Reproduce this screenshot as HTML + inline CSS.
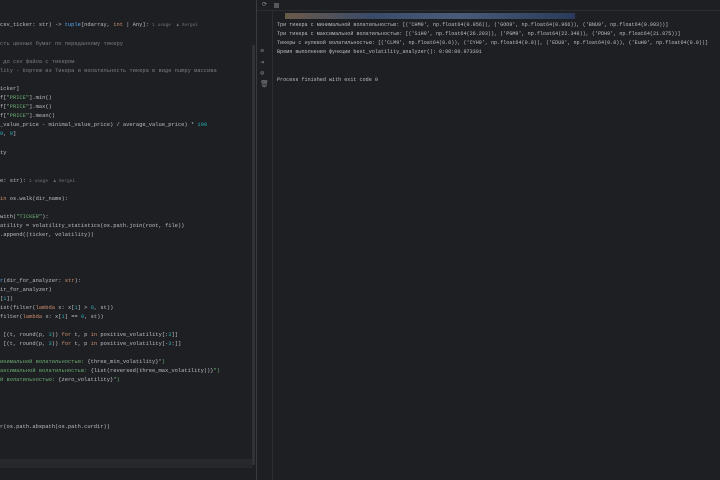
<!DOCTYPE html><html><head><meta charset="utf-8"><style>
body{margin:0;width:720px;height:480px;overflow:hidden;background:#1e1f22;font-family:"Liberation Mono","DejaVu Sans Mono",monospace;font-size:5.4px;color:#bcbec4}
.ed{position:absolute;left:0;top:0;width:256px;height:480px;background:#1e1f22;overflow:hidden}
.l{position:absolute;left:0;white-space:pre;line-height:8px}
.k{color:#cf8e6d}.s{color:#6aab73}.n{color:#2aacb8}.c{color:#7a7e85}.h{color:#6f737a;font-size:4.5px}.f{color:#56a8f5}
.div{position:absolute;left:256px;top:0;width:1px;height:480px;background:#393b40}
.con{position:absolute;left:257px;top:0;width:463px;height:480px;background:#1e1f22;overflow:hidden}
.tb{position:absolute;left:0;top:0;width:463px;height:10px;border-bottom:1px solid #2b2d30}
.side{position:absolute;left:0;top:11px;width:15px;height:469px;border-right:1px solid #2b2d30}
.o{position:absolute;left:20px;white-space:pre;line-height:8px;color:#bcbec4;font-size:5.1px}
</style></head><body>
<div class="ed">
<div class="l" style="top:21px">csv_ticker: str) -&gt; <span class="f">tuple</span>[ndarray, <span class="k">int</span> | Any]: <span class="h">1 usage  ♟ Sergei</span></div>
<div class="l c" style="top:40px">сть ценных бумаг по переданному тикеру</div>
<div class="l c" style="top:58px"> до csv файла с тикером</div>
<div class="l c" style="top:67px">lity - Кортеж из Тикера и волатильность тикера в виде numpy массива</div>
<div class="l" style="top:85px">icker]</div>
<div class="l" style="top:94px">f[<span class="s">"PRICE"</span>].min()</div>
<div class="l" style="top:103px">f[<span class="s">"PRICE"</span>].max()</div>
<div class="l" style="top:112px">f[<span class="s">"PRICE"</span>].mean()</div>
<div class="l" style="top:121px">_value_price - minimal_value_price) / average_value_price) * <span class="n">100</span></div>
<div class="l" style="top:130px"><span class="n">0</span>, <span class="n">0</span>]</div>
<div class="l" style="top:149px">ty</div>
<div class="l" style="top:177px">e: str): <span class="h">1 usage  ♟ Sergei</span></div>
<div class="l" style="top:195px"><span class="k">in</span> os.walk(dir_name):</div>
<div class="l" style="top:213px">with(<span class="s">"TICKER"</span>):</div>
<div class="l" style="top:222px">atility = volatility_statistics(os.path.join(root, file))</div>
<div class="l" style="top:231px">.append((ticker, volatility))</div>
<div class="l" style="top:277px"><span class="f">r</span>(dir_for_analyzer: <span class="k">str</span>):</div>
<div class="l" style="top:286px">ir_for_analyzer)</div>
<div class="l" style="top:295px">[<span class="n">1</span>])</div>
<div class="l" style="top:304px">ist(filter(<span class="k">lambda</span> x: x[<span class="n">1</span>] &gt; <span class="n">0</span>, st))</div>
<div class="l" style="top:313px">filter(<span class="k">lambda</span> x: x[<span class="n">1</span>] == <span class="n">0</span>, st))</div>
<div class="l" style="top:331px"> [(t, round(p, <span class="n">3</span>)) <span class="k">for</span> t, p <span class="k">in</span> positive_volatility[:<span class="n">3</span>]]</div>
<div class="l" style="top:340px"> [(t, round(p, <span class="n">3</span>)) <span class="k">for</span> t, p <span class="k">in</span> positive_volatility[-<span class="n">3</span>:]]</div>
<div class="l" style="top:358px"><span class="s">инимальной волатильностью: </span>{three_min_volatility}<span class="s">")</span></div>
<div class="l" style="top:367px"><span class="s">аксимальной волатильностью: </span>{list(reversed(three_max_volatility))}<span class="s">")</span></div>
<div class="l" style="top:376px"><span class="s">й волатильностью: </span>{zero_volatility}<span class="s">")</span></div>
<div class="l" style="top:423px">r(os.path.abspath(os.path.curdir))</div>
<div style="position:absolute;left:0;top:459px;width:252px;height:9px;background:#26282c"></div>
<div style="position:absolute;left:252px;top:45px;width:3px;height:420px;background:#2f3134"></div>
</div>
<div class="div"></div>
<div class="con">
<div class="tb"><span style="position:absolute;left:5px;top:1px;color:#8a8d92;font-size:6px">⟳</span><span style="position:absolute;left:17px;top:3px;width:5px;height:5px;background:#55585d"></span></div>
<div class="side"><div style="color:#7a7e85;font-size:7px;line-height:11px;padding:36px 0 0 3px">≡<br>⇥<br>⊜<br>🗑</div></div>
<div style="position:absolute;left:28px;top:13px;width:290px;height:6px;background:linear-gradient(90deg,#6a5a4a,#3a4a6a 30%,#4a5a7a 60%,#2a3a5a)"></div>
<div class="o" style="top:21px">Три тикера с минимальной волатильностью: [('CHM9', np.float64(0.956)), ('GOO9', np.float64(0.966)), ('BNU9', np.float64(0.983))]</div>
<div class="o" style="top:30px">Три тикера с максимальной волатильностью: [('SiH9', np.float64(26.203)), ('PGM9', np.float64(22.348)), ('PDH9', np.float64(21.875))]</div>
<div class="o" style="top:39px">Тикеры с нулевой волатильностью: [('CLM9', np.float64(0.0)), ('CYH9', np.float64(0.0)), ('EDU9', np.float64(0.0)), ('EuH0', np.float64(0.0))]</div>
<div class="o" style="top:48px">Время выполнения функции best_volatility_analyzer(): 0:00:00.973301</div>
<div class="o" style="top:76px">Process finished with exit code 0</div>
</div>
</body></html>
